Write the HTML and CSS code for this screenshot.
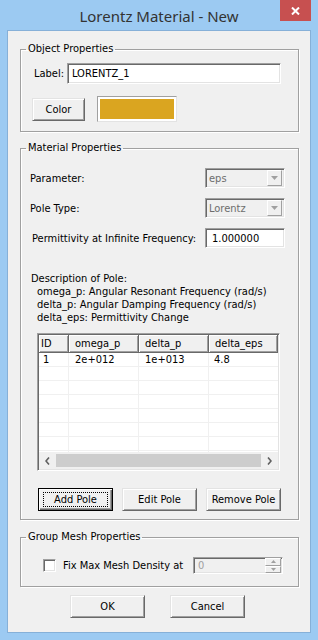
FILE: index.html
```html
<!DOCTYPE html>
<html>
<head>
<meta charset="utf-8">
<link rel="stylesheet" href="styles.css">
</head>
<body>
<div class="window">
  <div class="titlebar">
    <div class="title">Lorentz Material - New</div>
    <div class="close">
      <svg width="9" height="8" viewBox="0 0 9 8"><path d="M1 0.5 L8 7.5 M8 0.5 L1 7.5" stroke="#fff" stroke-width="2"/></svg>
    </div>
  </div>
  <div class="client">
    <fieldset class="group g1">
      <legend>Object Properties</legend>
      <div class="gbody">
        <div class="row label-row">
          <span class="lbl-label">Label:</span>
          <div class="edit label-edit">LORENTZ_1</div>
        </div>
        <div class="row color-row">
          <div class="btn color-btn">Color</div>
          <div class="swatch"><div class="swatch-fill"></div></div>
        </div>
      </div>
    </fieldset>

    <fieldset class="group g2">
      <legend>Material Properties</legend>
      <div class="gbody">
        <div class="prop-row">
          <span>Parameter:</span>
          <div class="combo"><span class="combo-text">eps</span><span class="drop"><svg width="7" height="4" viewBox="0 0 7 4"><path d="M0 0 H7 L3.5 4 Z" fill="#a0a0a0"/></svg></span></div>
        </div>
        <div class="prop-row">
          <span>Pole Type:</span>
          <div class="combo"><span class="combo-text">Lorentz</span><span class="drop"><svg width="7" height="4" viewBox="0 0 7 4"><path d="M0 0 H7 L3.5 4 Z" fill="#a0a0a0"/></svg></span></div>
        </div>
        <div class="prop-row last">
          <span class="perm-label">Permittivity at Infinite Frequency:</span>
          <div class="edit perm-edit">1.000000</div>
        </div>
        <div class="desc">
          <div>Description of Pole:</div>
          <div class="ind">omega_p: Angular Resonant Frequency (rad/s)</div>
          <div class="ind">delta_p: Angular Damping Frequency (rad/s)</div>
          <div class="ind">delta_eps: Permittivity Change</div>
        </div>
        <div class="list">
          <div class="lv-head">
            <div class="hc c0">ID</div>
            <div class="hc c1">omega_p</div>
            <div class="hc c2">delta_p</div>
            <div class="hc c3">delta_eps</div>
          </div>
          <div class="lv-body">
            <div class="lv-row"><div class="dc c0 d0">1</div><div class="dc c1 d1">2e+012</div><div class="dc c2 d2">1e+013</div><div class="dc c3 d3">4.8</div></div>
            <div class="lv-row"><div class="dc c0"></div><div class="dc c1"></div><div class="dc c2"></div><div class="dc c3"></div></div>
            <div class="lv-row"><div class="dc c0"></div><div class="dc c1"></div><div class="dc c2"></div><div class="dc c3"></div></div>
            <div class="lv-row"><div class="dc c0"></div><div class="dc c1"></div><div class="dc c2"></div><div class="dc c3"></div></div>
            <div class="lv-row"><div class="dc c0"></div><div class="dc c1"></div><div class="dc c2"></div><div class="dc c3"></div></div>
            <div class="lv-row"><div class="dc c0"></div><div class="dc c1"></div><div class="dc c2"></div><div class="dc c3"></div></div>
            <div class="lv-row"><div class="dc c0"></div><div class="dc c1"></div><div class="dc c2"></div><div class="dc c3"></div></div>
            <div class="lv-row"><div class="dc c0"></div><div class="dc c1"></div><div class="dc c2"></div><div class="dc c3"></div></div>
          </div>
          <div class="hscroll">
            <div class="sb-arrow"><svg width="5" height="8" viewBox="0 0 5 8"><path d="M4 0.5 L1 4 L4 7.5" fill="none" stroke="#606060" stroke-width="1.6"/></svg></div>
            <div class="sb-track"><div class="sb-thumb"></div></div>
            <div class="sb-arrow"><svg width="5" height="8" viewBox="0 0 5 8"><path d="M1 0.5 L4 4 L1 7.5" fill="none" stroke="#606060" stroke-width="1.6"/></svg></div>
          </div>
        </div>
        <div class="pole-btns">
          <div class="btn default"><span class="focus">Add Pole</span></div>
          <div class="btn">Edit Pole</div>
          <div class="btn">Remove Pole</div>
        </div>
      </div>
    </fieldset>

    <fieldset class="group g3">
      <legend>Group Mesh Properties</legend>
      <div class="gbody">
        <div class="mesh-row">
          <div class="check"></div>
          <span class="mesh-label">Fix Max Mesh Density at</span>
          <div class="spin">
            <span class="spin-text">0</span>
            <div class="spin-btns">
              <div class="spin-b"><svg width="5" height="3" viewBox="0 0 5 3"><path d="M0 3 H5 L2.5 0 Z" fill="#a0a0a0"/></svg></div>
              <div class="spin-b"><svg width="5" height="3" viewBox="0 0 5 3"><path d="M0 0 H5 L2.5 3 Z" fill="#a0a0a0"/></svg></div>
            </div>
          </div>
        </div>
      </div>
    </fieldset>

    <div class="dlg-btns">
      <div class="btn">OK</div>
      <div class="btn">Cancel</div>
    </div>
  </div>
</div>
</body>
</html>
```
FILE: styles.css
```css
* { box-sizing: border-box; }
html, body { margin: 0; padding: 0; }
body {
  width: 318px;
  height: 640px;
  background: #9ccaf2;
  font-family: "DejaVu Sans Condensed", "DejaVu Sans", "Liberation Sans", sans-serif;
  font-stretch: condensed;
  font-size: 11px;
  color: #000;
  overflow: hidden;
}
.window { display: flex; flex-direction: column; height: 640px; }
.titlebar {
  height: 30px;
  display: grid;
  grid-template-columns: 1fr;
}
.title {
  grid-area: 1 / 1;
  justify-self: center;
  font-family: "Noto Sans", "Open Sans", sans-serif;
  font-stretch: normal;
  font-size: 15px;
  line-height: 30px;
  color: #333;
  padding-top: 1px;
}
.close {
  grid-area: 1 / 1;
  justify-self: end;
  align-self: start;
  width: 31px;
  height: 21px;
  margin-right: 7px;
  background: #c75050;
  display: flex;
  align-items: center;
  justify-content: center;
}
.client {
  margin: 0 7px;
  height: 603px;
  border: 1px solid #86b0d8;
  background: #f0f0f0;
  display: flex;
  flex-direction: column;
}
.group {
  margin: 0 0 0 12px;
  width: 279px;
  border: 1px solid #a0a0a0;
  box-shadow: inset 1px 1px 0 #fff, 1px 1px 0 #fff;
  padding: 0;
  min-width: 0;
}
.group legend {
  padding: 0 2px;
  margin-left: 5px;
  line-height: 14px;
  height: 14px;
}
.g1 { margin-top: 11px; }
.g1 .gbody { padding: 7px 0 9px 11px; }
.g2 { margin-top: 9px; }
.g2 .gbody { padding: 13px 13px 8px 9px; }
.g3 { margin-top: 10px; }
.g3 .gbody { padding: 13px 0 12px 22px; }

.row { display: flex; align-items: center; }
.label-row { height: 21px; }
.lbl-label { margin-left: 2px; width: 33px; }
.edit {
  background: #fff;
  border: 1px solid;
  border-color: #a0a0a0 #fff #fff #a0a0a0;
  box-shadow: inset 1px 1px 0 #696969, inset -1px -1px 0 #e3e3e3;
  padding-left: 4px;
  display: flex;
  align-items: center;
}
.label-edit { width: 214px; height: 21px; }
.color-row { margin-top: 12px; height: 26px; }
.btn {
  background: #f0f0f0;
  border: 1px solid;
  border-color: #e3e3e3 #696969 #696969 #e3e3e3;
  box-shadow: inset 1px 1px 0 #fff, inset -1px -1px 0 #a0a0a0;
  display: flex;
  align-items: center;
  justify-content: center;
  width: 75px;
  height: 23px;
}
.color-btn { width: 53px; }
.swatch {
  margin-left: 12px;
  width: 80px;
  height: 26px;
  border: 1px solid #a0a0a0;
  border-color: #a0a0a0 #e3e3e3 #e3e3e3 #a0a0a0;
  background: #fff;
  padding: 2px;
}
.swatch-fill { width: 100%; height: 100%; background: #daa520; }

.prop-row {
  display: flex;
  align-items: center;
  justify-content: space-between;
  height: 20px;
  margin-bottom: 10px;
}
.prop-row.last { margin-bottom: 0; }
.perm-label { margin-left: 2px; }
.combo {
  width: 80px;
  height: 20px;
  background: #f0f0f0;
  border: 1px solid;
  border-color: #a0a0a0 #fff #fff #a0a0a0;
  box-shadow: inset 1px 1px 0 #696969, inset -1px -1px 0 #e3e3e3;
  display: flex;
  align-items: center;
  padding: 2px 2px 2px 3px;
}
.combo-text { flex: 1; color: #6d6d6d; }
.drop {
  width: 15px;
  height: 16px;
  border: 1px solid;
  border-color: #fff #a0a0a0 #a0a0a0 #fff;
  background: #f0f0f0;
  display: flex;
  align-items: center;
  justify-content: center;
}
.perm-edit { width: 80px; height: 20px; padding-left: 6px; }
.desc { margin-top: 24px; line-height: 13px; margin-left: 1px; }
.desc .ind { padding-left: 6px; }

.list {
  margin-top: 9px;
  margin-left: 7px;
  width: 243px;
  height: 138px;
  border: 1px solid;
  border-color: #a0a0a0 #fff #fff #a0a0a0;
  box-shadow: inset 1px 1px 0 #696969, inset -1px -1px 0 #e3e3e3;
  padding: 1px;
  display: flex;
  flex-direction: column;
  background: #fff;
}
.lv-head { display: flex; height: 18px; flex: none; }
.hc {
  height: 18px;
  background: #f0f0f0;
  border-right: 1px solid #696969;
  border-bottom: 1px solid #696969;
  box-shadow: inset 1px 1px 0 #fff, inset -1px -1px 0 #a0a0a0;
  line-height: 17px;
  padding-left: 6px;
}
.c0 { width: 30px; }
.c1 { width: 70px; }
.c2 { width: 70px; }
.c3 { width: 69px; }
.hc.c0 { padding-left: 2px; }
.lv-body { height: 99px; overflow: hidden; flex: none; }
.lv-row { display: flex; height: 14px; }
.dc {
  height: 14px;
  border-right: 1px solid #f0f0f0;
  border-bottom: 1px solid #f0f0f0;
  line-height: 13px;
}
.dc.c3 { border-right: none; }
.d0 { padding-left: 4px; }
.d1 { padding-left: 6px; }
.d2 { padding-left: 6px; }
.d3 { padding-left: 5px; }

.hscroll { display: flex; height: 17px; flex: none; background: #f0f0f0; }
.sb-arrow { width: 17px; display: flex; align-items: center; justify-content: center; }
.sb-track { flex: 1; display: flex; align-items: center; }
.sb-thumb { width: 100%; height: 13px; background: #cdcdcd; }

.pole-btns { display: flex; gap: 9px; margin-top: 17px; margin-left: 8px; }
.btn.default {
  border-color: #000;
  box-shadow: inset 1px 1px 0 #fff, inset -1px -1px 0 #696969, inset -2px -2px 0 #a0a0a0;
}
.focus {
  border: 1px dotted #000;
  width: 65px;
  height: 15px;
  display: flex;
  align-items: center;
  justify-content: center;
}

.mesh-row { display: flex; align-items: center; height: 17px; }
.check {
  width: 13px;
  height: 13px;
  background: #fff;
  border: 1px solid;
  border-color: #a0a0a0 #fff #fff #a0a0a0;
  box-shadow: inset 1px 1px 0 #696969, inset -1px -1px 0 #e3e3e3;
}
.mesh-label { margin-left: 7px; width: 130px; }
.spin {
  width: 90px;
  height: 17px;
  background: #f0f0f0;
  border: 1px solid;
  border-color: #a0a0a0 #fff #fff #a0a0a0;
  box-shadow: inset 1px 1px 0 #696969, inset -1px -1px 0 #e3e3e3;
  display: flex;
  align-items: center;
  padding: 1px 1px 1px 4px;
}
.spin-text { flex: 1; color: #a0a0a0; }
.spin-btns { display: flex; flex-direction: column; width: 16px; height: 15px; }
.spin-b {
  flex: 1;
  border: 1px solid;
  border-color: #fff #a0a0a0 #a0a0a0 #fff;
  display: flex;
  align-items: center;
  justify-content: center;
}

.dlg-btns { display: flex; gap: 25px; margin-top: 8px; margin-left: 62px; }
```
